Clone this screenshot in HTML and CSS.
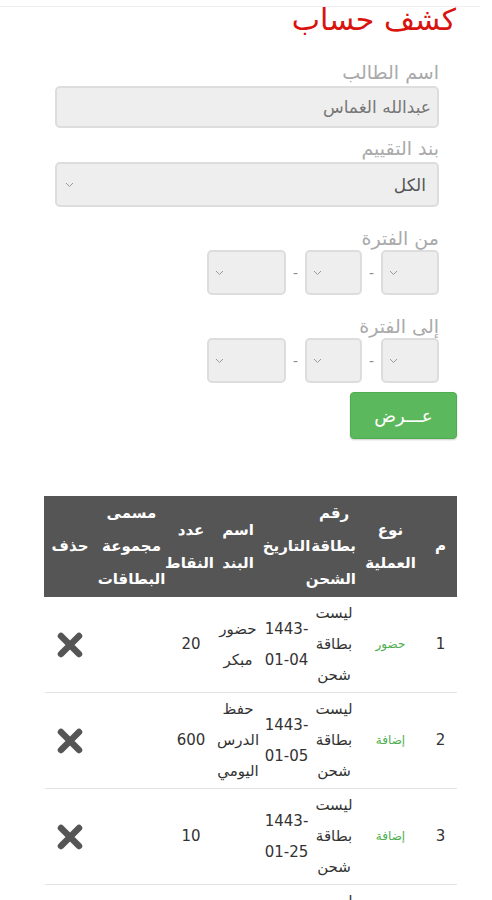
FILE: index.html
```html
<!DOCTYPE html>
<html lang="ar" dir="rtl">
<head>
    <meta charset="utf-8">
    <link rel="stylesheet" href="styles.css">
</head>
<body>

<div class="topbar"></div>

<div class="page">
    <h1 class="title">كشف حساب</h1>

    <div class="fields">
        <label class="label">اسم الطالب</label>
        <div class="box text-box">عبدالله الغماس</div>

        <label class="label">بند التقييم</label>
        <div class="box select-box">
            <span>الكل</span>
            <svg class="chev" width="9" height="6" viewBox="0 0 9 6"><path d="M1 1l3.5 3.5L8 1" fill="none" stroke="#999" stroke-width="1"/></svg>
        </div>

        <label class="label label-gap">من الفترة</label>
        <div class="date-row">
            <div class="box date day"><svg class="chev" width="9" height="6" viewBox="0 0 9 6"><path d="M1 1l3.5 3.5L8 1" fill="none" stroke="#999" stroke-width="1"/></svg></div>
            <span class="dash">-</span>
            <div class="box date month"><svg class="chev" width="9" height="6" viewBox="0 0 9 6"><path d="M1 1l3.5 3.5L8 1" fill="none" stroke="#999" stroke-width="1"/></svg></div>
            <span class="dash">-</span>
            <div class="box date year"><svg class="chev" width="9" height="6" viewBox="0 0 9 6"><path d="M1 1l3.5 3.5L8 1" fill="none" stroke="#999" stroke-width="1"/></svg></div>
        </div>

        <label class="label label-gap">إلى الفترة</label>
        <div class="date-row">
            <div class="box date day"><svg class="chev" width="9" height="6" viewBox="0 0 9 6"><path d="M1 1l3.5 3.5L8 1" fill="none" stroke="#999" stroke-width="1"/></svg></div>
            <span class="dash">-</span>
            <div class="box date month"><svg class="chev" width="9" height="6" viewBox="0 0 9 6"><path d="M1 1l3.5 3.5L8 1" fill="none" stroke="#999" stroke-width="1"/></svg></div>
            <span class="dash">-</span>
            <div class="box date year"><svg class="chev" width="9" height="6" viewBox="0 0 9 6"><path d="M1 1l3.5 3.5L8 1" fill="none" stroke="#999" stroke-width="1"/></svg></div>
        </div>
    </div>

    <button class="show-button">عـــرض</button>

    <table class="report">
        <colgroup>
            <col style="width:32px">
            <col style="width:68px">
            <col style="width:45px">
            <col style="width:50px">
            <col style="width:47px">
            <col style="width:47px">
            <col style="width:72px">
            <col style="width:51px">
        </colgroup>
        <thead>
            <tr>
                <th>م</th>
                <th>نوع العملية</th>
                <th>رقم بطاقة الشحن</th>
                <th>التاريخ</th>
                <th>اسم البند</th>
                <th>عدد النقاط</th>
                <th>مسمى مجموعة البطاقات</th>
                <th>حذف</th>
            </tr>
        </thead>
        <tbody>
            <tr>
                <td>1</td>
                <td class="kind">حضور</td>
                <td>ليست بطاقة شحن</td>
                <td>1443-01-04</td>
                <td>حضور مبكر</td>
                <td>20</td>
                <td></td>
                <td><svg class="del" width="28" height="28" viewBox="0 0 28 28"><path d="M5 5L23 23M23 5L5 23" stroke="#555" stroke-width="6.5" stroke-linecap="round"/></svg></td>
            </tr>
            <tr>
                <td>2</td>
                <td class="kind">إضافة</td>
                <td>ليست بطاقة شحن</td>
                <td>1443-01-05</td>
                <td>حفظ الدرس اليومي</td>
                <td>600</td>
                <td></td>
                <td><svg class="del" width="28" height="28" viewBox="0 0 28 28"><path d="M5 5L23 23M23 5L5 23" stroke="#555" stroke-width="6.5" stroke-linecap="round"/></svg></td>
            </tr>
            <tr>
                <td>3</td>
                <td class="kind">إضافة</td>
                <td>ليست بطاقة شحن</td>
                <td>1443-01-25</td>
                <td></td>
                <td>10</td>
                <td></td>
                <td><svg class="del" width="28" height="28" viewBox="0 0 28 28"><path d="M5 5L23 23M23 5L5 23" stroke="#555" stroke-width="6.5" stroke-linecap="round"/></svg></td>
            </tr>
            <tr>
                <td>4</td>
                <td class="kind">إضافة</td>
                <td>ليست بطاقة شحن</td>
                <td>1443-01-26</td>
                <td></td>
                <td>10</td>
                <td></td>
                <td><svg class="del" width="28" height="28" viewBox="0 0 28 28"><path d="M5 5L23 23M23 5L5 23" stroke="#555" stroke-width="6.5" stroke-linecap="round"/></svg></td>
            </tr>
        </tbody>
    </table>
</div>

</body>
</html>
```

FILE: styles.css
```css
body, html {
    margin: 0;
    background: #fff;
    font-family: "DejaVu Sans", sans-serif;
    overflow: hidden;
}

.topbar {
    height: 6px;
    margin: 0 12px 0 0;
    border-bottom: 1px solid #eee;
}

.page {
    padding: 0 35px 0 45px;
}

.title {
    margin: -5px 0 0;
    color: #d9140f;
    font-size: 30px;
    font-weight: normal;
    line-height: 36px;
    padding-right: 1px;
}

.fields {
    margin: 2px 18px 0 10px;
    display: flex;
    flex-direction: column;
}

.label {
    color: #aaa;
    font-size: 19px;
    line-height: 24px;
    margin-top: 20px;
    margin-bottom: 2px;
}

.text-box + .label {
    margin-top: 8px;
}

.label-gap {
    margin-top: 19px;
    margin-bottom: 0;
}

.box {
    background: #eee;
    border: 2px solid #ddd;
    border-radius: 5px;
    box-sizing: border-box;
    display: flex;
    align-items: center;
}

.text-box {
    height: 42px;
    padding: 0 6px;
    color: #777;
    font-size: 17px;
}

.select-box {
    height: 45px;
    padding: 0 11px 0 8px;
    justify-content: space-between;
    color: #555;
    font-size: 17px;
}

.date-row {
    display: flex;
    align-items: center;
}

.date {
    height: 45px;
    justify-content: flex-end;
    padding-left: 6px;
}

.day {
    width: 58px;
}

.month {
    width: 57px;
}

.year {
    width: 79px;
}

.dash {
    width: 19px;
    text-align: center;
    color: #888;
    font-size: 14px;
}

.show-button {
    display: block;
    margin-top: 9px;
    width: 107px;
    height: 47px;
    border: 1px solid #4cae4c;
    border-radius: 4px;
    background: #5cb85c;
    color: #fff;
    font-family: "DejaVu Sans", sans-serif;
    font-size: 18px;
    box-shadow: 0 1px 2px rgba(0, 0, 0, 0.2);
}

.report {
    margin-top: 57px;
    width: 412px;
    table-layout: fixed;
    border-collapse: collapse;
    font-size: 15px;
}

.report th {
    background: #555;
    color: #fff;
    font-weight: bold;
    line-height: 33px;
    padding: 0;
    vertical-align: middle;
    border: 1px solid #555;
}

.report td {
    color: #333;
    text-align: center;
    line-height: 31px;
    padding: 1px 0;
    vertical-align: middle;
    border-bottom: 1px solid #e3e3e3;
}

.report .kind {
    color: #4cae4c;
    font-size: 12px;
}

.del {
    display: block;
    margin: 0 auto;
}
```
